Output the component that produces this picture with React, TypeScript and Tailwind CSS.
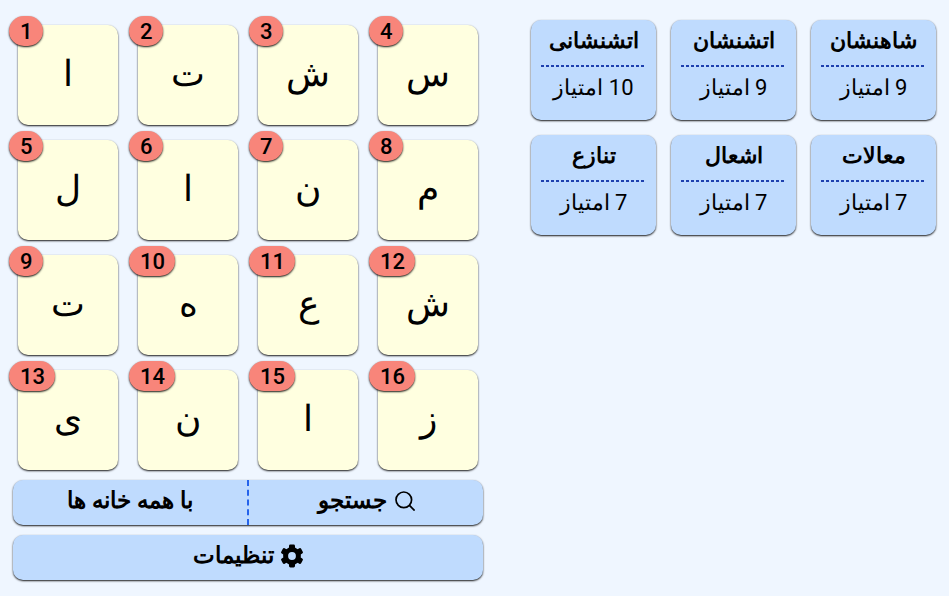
const letters = ["ا", "ت", "ش", "س", "ل", "ا", "ن", "م", "ت", "ه", "ع", "ش", "ی", "ن", "ا", "ز"];

const words = [
  { word: "شاهنشان", score: 9 },
  { word: "اتشنشان", score: 9 },
  { word: "اتشنشانی", score: 10 },
  { word: "معالات", score: 7 },
  { word: "اشعال", score: 7 },
  { word: "تنازع", score: 7 },
];

const shadow = "shadow-[0_1px_2px_rgba(0,0,0,0.9)]";

function SearchIcon() {
  return (
    <svg className="size-5" viewBox="0 0 20 20" fill="none" stroke="currentColor" strokeWidth="1.7" aria-hidden="true">
      <circle cx="8.8" cy="8.8" r="7.8" />
      <path d="M14.2 14.2l5.4 5.4" />
    </svg>
  );
}

function GearIcon() {
  return (
    <svg className="size-6" viewBox="0 0 24 24" fill="currentColor" aria-hidden="true">
      <circle cx="12" cy="12" r="6.4" fill="none" stroke="currentColor" strokeWidth="5" />
      {[0, 60, 120, 180, 240, 300].map((angle) => (
        <rect key={angle} x="9" y="0.5" width="6" height="6" rx="1.4" transform={`rotate(${angle} 12 12)`} />
      ))}
    </svg>
  );
}

function Tile({ letter, index }: { letter: string; index: number }) {
  return (
    <div className={`relative flex h-[100px] w-[100px] items-center justify-center rounded-[10px] bg-[#ffffe0] pb-[2px] ${shadow}`}>
      <span className={`absolute -left-[9px] -top-[9px] rounded-full bg-[#f8857a] pl-[11px] pr-[10px] pt-px text-[22px] font-medium leading-[29px] ${shadow}`}>
        {index}
      </span>
      <span dir="rtl" className="text-4xl">{letter}</span>
    </div>
  );
}

export default function App() {
  return (
    <div dir="ltr" className="flex min-h-screen items-start bg-[#eff6ff] font-[Roboto,sans-serif] text-black">
      <main className="ml-2 w-[480px] shrink-0 pb-4 pt-[25px]">
        <div className="grid grid-cols-4 justify-items-center gap-y-[15px]">
          {letters.map((letter, i) => (
            <Tile key={i} letter={letter} index={i + 1} />
          ))}
        </div>
        <div dir="rtl" className="mx-[5px] mt-[10px] flex flex-col gap-[10px] text-[23px] font-bold">
          <div className={`flex h-[45px] overflow-hidden rounded-[10px] bg-[#bfdbfe] ${shadow}`}>
            <button type="button" className="flex flex-1 items-center justify-center gap-2 pb-[3px]">
              <SearchIcon />
              جستجو
            </button>
            <button type="button" className="flex-1 border-r-2 border-dashed border-[#2563eb] pb-[3px]">
              با همه خانه ها
            </button>
          </div>
          <button type="button" className={`flex h-[45px] items-center justify-center gap-[6px] rounded-[10px] bg-[#bfdbfe] pb-[3px] ${shadow}`}>
            <GearIcon />
            تنظیمات
          </button>
        </div>
      </main>
      <section dir="rtl" className="flex flex-1 flex-wrap gap-[15px] pr-[13px] pt-5">
        {words.map(({ word, score }) => (
          <article key={word} className={`h-[100px] w-[125px] rounded-[10px] bg-[#bfdbfe] px-[10px] pt-[5px] text-center text-[22px] leading-8 ${shadow}`}>
            <h2 className="pb-2 font-bold">{word}</h2>
            <div className="h-[2px] bg-[repeating-linear-gradient(to_right,#1e40af_0_3px,transparent_3px_5px)]" />
            <p className="pt-[5px]">{score} امتیاز</p>
          </article>
        ))}
      </section>
    </div>
  );
}
